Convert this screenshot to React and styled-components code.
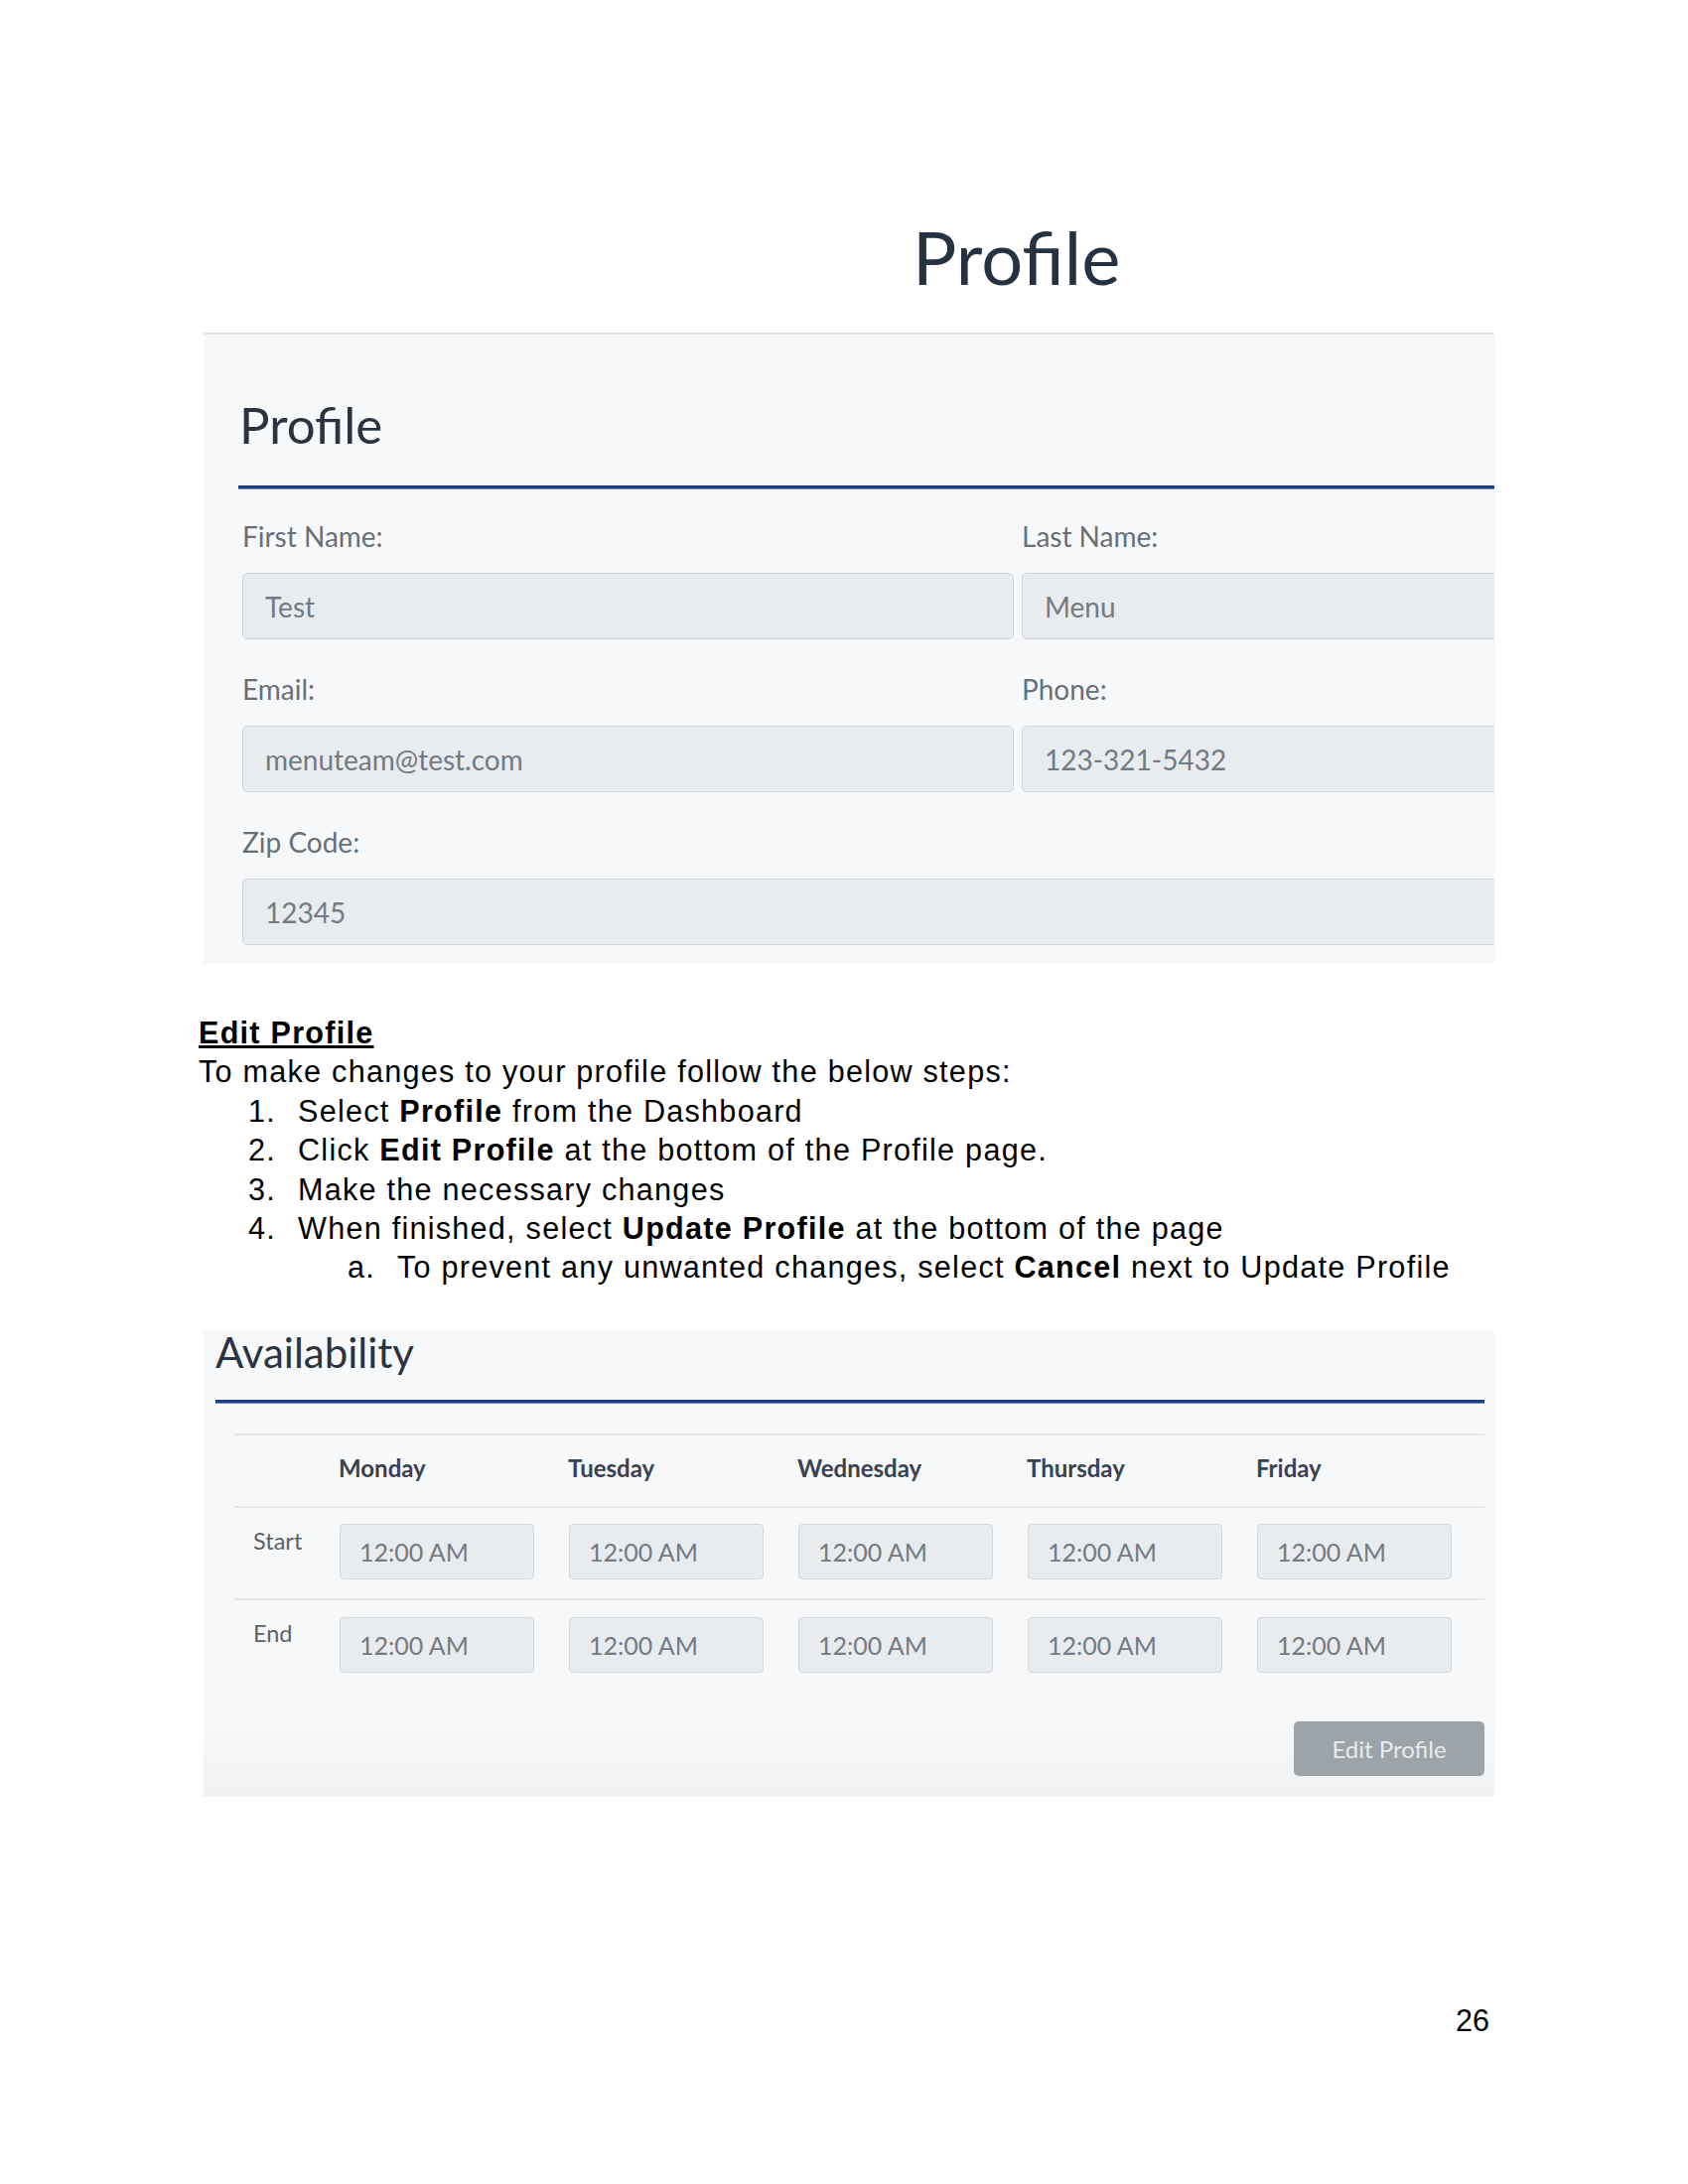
import styled, { createGlobalStyle } from "styled-components"

const GlobalStyle = createGlobalStyle`
  body {
    margin: 0;
    background: #ffffff;
  }
`

const Page = styled.div`
  box-sizing: border-box;
  width: 1700px;
  min-height: 2200px;
  padding: 219px 200px 0 200px;
  background: #ffffff;
`

const Shot = styled.div`
  margin-left: 5px;
  width: 1300px;
  font-family: Lato, "Open Sans", sans-serif;
`

const PageTitle = styled.h1`
  margin: 0 0 36px 0;
  padding-left: 714px;
  font-size: 74px;
  line-height: 80px;
  font-weight: 400;
  color: #253242;
`

const Panel = styled.div`
  border-top: 2px solid #e2e4e6;
  background: #f7f8fa;
  padding: 61px 0 19px 35px;
  overflow: hidden;
`

const SectionTitle = styled.h2`
  margin: 0 0 0 1px;
  font-size: 51px;
  line-height: 60px;
  font-weight: 400;
  color: #2a3340;
`

const Rule = styled.div`
  height: 3px;
  background: #1f3e88;
  box-shadow: 0 1px 0 #6f8ac0;
  margin: ${p => p.$top}px 0 ${p => p.$bottom}px 0;
`

const FieldGrid = styled.div`
  display: grid;
  grid-template-columns: 777px 777px;
  column-gap: 8px;
  row-gap: 32px;
  margin-left: 4px;
`

const Field = styled.div`
  display: flex;
  flex-direction: column;
  gap: 19px;
  grid-column: ${p => (p.$wide ? "1 / -1" : "auto")};
`

const Label = styled.div`
  font-size: 28px;
  line-height: 36px;
  color: #676f78;
`

const InputBox = styled.div`
  box-sizing: border-box;
  height: 67px;
  display: flex;
  align-items: center;
  padding: 0 22px;
  background: #e9ecef;
  border: 1px solid #d2d6da;
  border-radius: 5px;
  font-size: 28px;
  color: #737a82;
`

const Doc = styled.div`
  margin-top: 50px;
  font-family: "Liberation Sans", Arial, sans-serif;
  font-size: 30.6px;
  line-height: 39.4px;
  letter-spacing: 1.25px;
  color: #000000;
`

const DocHeading = styled.div`
  font-weight: 700;
  text-decoration: underline;
`

const Step = styled.div`
  display: flex;
  padding-left: ${p => p.$indent}px;
`

const StepNum = styled.span`
  width: 50px;
  flex-shrink: 0;
`

const AvailPanel = styled.div`
  margin-top: 43px;
  padding: 0 10px 21px 12px;
  background: linear-gradient(#f7f8fa 0%, #f7f8fa 82%, #eff1f3 100%);
`

const AvailTitle = styled.h2`
  margin: 0;
  padding-top: 4px;
  font-size: 42px;
  line-height: 36px;
  font-weight: 400;
  color: #2a3340;
`

const TableWrap = styled.div`
  margin-left: 19px;
  overflow: hidden;
`

const Row = styled.div`
  display: grid;
  grid-template-columns: 103px repeat(6, 231px);
  border-top: ${p => (p.$top ? "2px solid #e6e8eb" : "none")};
  border-bottom: ${p => (p.$last ? "none" : "2px solid #e6e8eb")};
  height: ${p => p.$height}px;
  box-sizing: border-box;
`

const DayHead = styled.div`
  padding: 18px 0 0 2px;
  font-size: 24px;
  line-height: 30px;
  font-weight: 700;
  color: #3a4250;
  white-space: nowrap;
`

const RowLabel = styled.div`
  padding: 19px 0 0 19px;
  font-size: 23.5px;
  line-height: 28px;
  color: #5a626b;
`

const TimeBox = styled.div`
  box-sizing: border-box;
  width: 196px;
  height: 56px;
  margin: ${p => p.$top}px 0 0 3px;
  display: flex;
  align-items: center;
  padding-left: 19px;
  background: #e9ecef;
  border: 1px solid #d4d8dc;
  border-radius: 4px;
  font-size: 25px;
  color: #737a82;
  white-space: nowrap;
`

const ButtonRow = styled.div`
  display: flex;
  justify-content: flex-end;
  margin-top: 29px;
`

const GrayButton = styled.button`
  width: 192px;
  height: 55px;
  border: none;
  border-radius: 5px;
  background: #9ca3a9;
  color: #e9ebed;
  font-family: Lato, "Open Sans", sans-serif;
  font-size: 24px;
  padding: 0;
`

const PageNumber = styled.div`
  margin-top: 206px;
  text-align: right;
  font-family: "Liberation Sans", Arial, sans-serif;
  font-size: 30.6px;
  line-height: 39.4px;
  color: #000000;
`

const fields = [
  { label: "First Name:", value: "Test" },
  { label: "Last Name:", value: "Menu" },
  { label: "Email:", value: "menuteam@test.com" },
  { label: "Phone:", value: "123-321-5432" },
  { label: "Zip Code:", value: "12345", wide: true },
]

const days = ["Monday", "Tuesday", "Wednesday", "Thursday", "Friday", "Saturday"]

export default function App() {
  return (
    <>
      <GlobalStyle />
      <Page>
        <Shot>
          <PageTitle>Profile</PageTitle>
          <Panel>
            <SectionTitle>Profile</SectionTitle>
            <Rule $top={31} $bottom={30} />
            <FieldGrid>
              {fields.map(f => (
                <Field key={f.label} $wide={f.wide}>
                  <Label>{f.label}</Label>
                  <InputBox>{f.value}</InputBox>
                </Field>
              ))}
            </FieldGrid>
          </Panel>
        </Shot>

        <Doc>
          <DocHeading>Edit Profile</DocHeading>
          <div>To make changes to your profile follow the below steps:</div>
          <Step $indent={50}>
            <StepNum>1.</StepNum>
            <span>Select <b>Profile</b> from the Dashboard</span>
          </Step>
          <Step $indent={50}>
            <StepNum>2.</StepNum>
            <span>Click <b>Edit Profile</b> at the bottom of the Profile page.</span>
          </Step>
          <Step $indent={50}>
            <StepNum>3.</StepNum>
            <span>Make the necessary changes</span>
          </Step>
          <Step $indent={50}>
            <StepNum>4.</StepNum>
            <span>When finished, select <b>Update Profile</b> at the bottom of the page</span>
          </Step>
          <Step $indent={150}>
            <StepNum>a.</StepNum>
            <span>To prevent any unwanted changes, select <b>Cancel</b> next to Update Profile</span>
          </Step>
        </Doc>

        <Shot>
          <AvailPanel>
            <AvailTitle>Availability</AvailTitle>
            <Rule $top={30} $bottom={31} />
            <TableWrap>
              <Row $top $height={75}>
                <div />
                {days.map(d => (
                  <DayHead key={d}>{d}</DayHead>
                ))}
              </Row>
              <Row $height={93}>
                <RowLabel>Start</RowLabel>
                {days.map(d => (
                  <TimeBox key={d} $top={16}>12:00 AM</TimeBox>
                ))}
              </Row>
              <Row $last $height={93}>
                <RowLabel>End</RowLabel>
                {days.map(d => (
                  <TimeBox key={d} $top={17}>12:00 AM</TimeBox>
                ))}
              </Row>
            </TableWrap>
            <ButtonRow>
              <GrayButton>Edit Profile</GrayButton>
            </ButtonRow>
          </AvailPanel>
        </Shot>

        <PageNumber>26</PageNumber>
      </Page>
    </>
  )
}
